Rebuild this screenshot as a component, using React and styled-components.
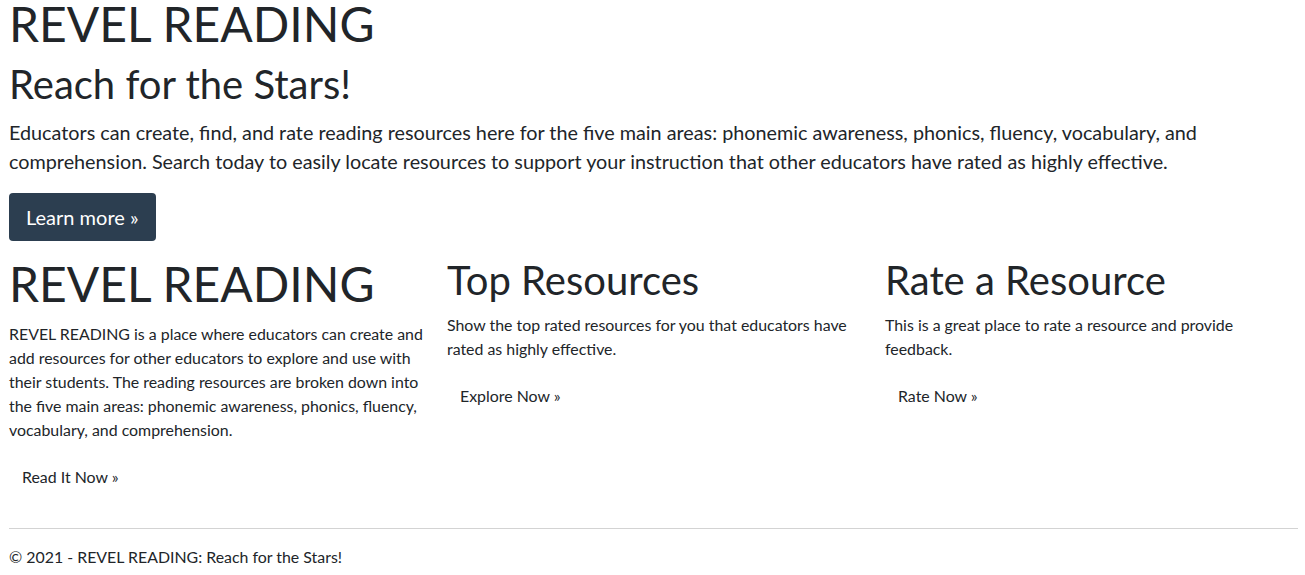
import styled, { createGlobalStyle } from 'styled-components'

const GlobalStyle = createGlobalStyle`
  body {
    margin: 0;
    background: #ffffff;
    color: #212529;
    font-family: Lato, "Open Sans", sans-serif;
  }
  * {
    box-sizing: border-box;
  }
`

const columns = [
  {
    title: 'REVEL READING',
    big: true,
    text: 'REVEL READING is a place where educators can create and add resources for other educators to explore and use with their students. The reading resources are broken down into the five main areas: phonemic awareness, phonics, fluency, vocabulary, and comprehension.',
    link: 'Read It Now »',
  },
  {
    title: 'Top Resources',
    text: 'Show the top rated resources for you that educators have rated as highly effective.',
    link: 'Explore Now »',
  },
  {
    title: 'Rate a Resource',
    text: 'This is a great place to rate a resource and provide feedback.',
    link: 'Rate Now »',
  },
]

export default function App() {
  return (
    <>
      <GlobalStyle />
      <Page>
        <Jumbo>
          <Title>REVEL READING</Title>
          <Tagline>Reach for the Stars!</Tagline>
          <Lead>
            Educators can create, find, and rate reading resources here for the
            five main areas: phonemic awareness, phonics, fluency, vocabulary,
            and comprehension. Search today to easily locate resources to
            support your instruction that other educators have rated as highly
            effective.
          </Lead>
          <PrimaryButton href="#">Learn more »</PrimaryButton>
        </Jumbo>
        <Row>
          {columns.map((c) => (
            <Column key={c.title}>
              <ColumnTitle $big={c.big}>{c.title}</ColumnTitle>
              <ColumnText>{c.text}</ColumnText>
              <LinkButton href="#">{c.link}</LinkButton>
            </Column>
          ))}
        </Row>
        <Footer>
          <Rule />
          <Copy>© 2021 - REVEL READING: Reach for the Stars!</Copy>
        </Footer>
      </Page>
    </>
  )
}

const Page = styled.div`
  padding: 0 7px 0 9px;
`

const Jumbo = styled.div`
  display: flex;
  flex-direction: column;
  align-items: flex-start;
`

const Title = styled.h1`
  font-size: 48px;
  font-weight: 400;
  line-height: 48px;
  margin: 0;
`

const Tagline = styled.h2`
  font-size: 40px;
  font-weight: 400;
  line-height: 48px;
  margin: 12px 0 10px;
`

const Lead = styled.p`
  font-size: 19.8px;
  line-height: 29px;
  margin: 0 0 17px;
`

const PrimaryButton = styled.a`
  display: inline-block;
  background: #2c3e50;
  color: #ffffff;
  text-decoration: none;
  font-size: 20px;
  line-height: 28px;
  padding: 10px 17px;
  border-radius: 4px;
`

const Row = styled.div`
  display: grid;
  grid-template-columns: repeat(3, 415px);
  column-gap: 23px;
  margin-top: 15px;
`

const Column = styled.div`
  display: flex;
  flex-direction: column;
  align-items: flex-start;
`

const ColumnTitle = styled.h2`
  font-size: ${(p) => (p.$big ? '48px' : '40px')};
  font-weight: 400;
  line-height: ${(p) => (p.$big ? '56px' : '48px')};
  margin: 0 0 ${(p) => (p.$big ? '10px' : '9px')};
`

const ColumnText = styled.p`
  font-size: 15.9px;
  line-height: 24px;
  margin: 0 0 15px;
`

const LinkButton = styled.a`
  display: inline-block;
  color: #212529;
  text-decoration: none;
  font-size: 15.9px;
  line-height: 24px;
  padding: 8px 13px;
`

const Footer = styled.footer`
  margin-top: 31px;
`

const Rule = styled.hr`
  border: 0;
  border-top: 1px solid #d3d3d3;
  margin: 0 0 16px;
`

const Copy = styled.p`
  font-size: 15.9px;
  line-height: 24px;
  margin: 0;
`
